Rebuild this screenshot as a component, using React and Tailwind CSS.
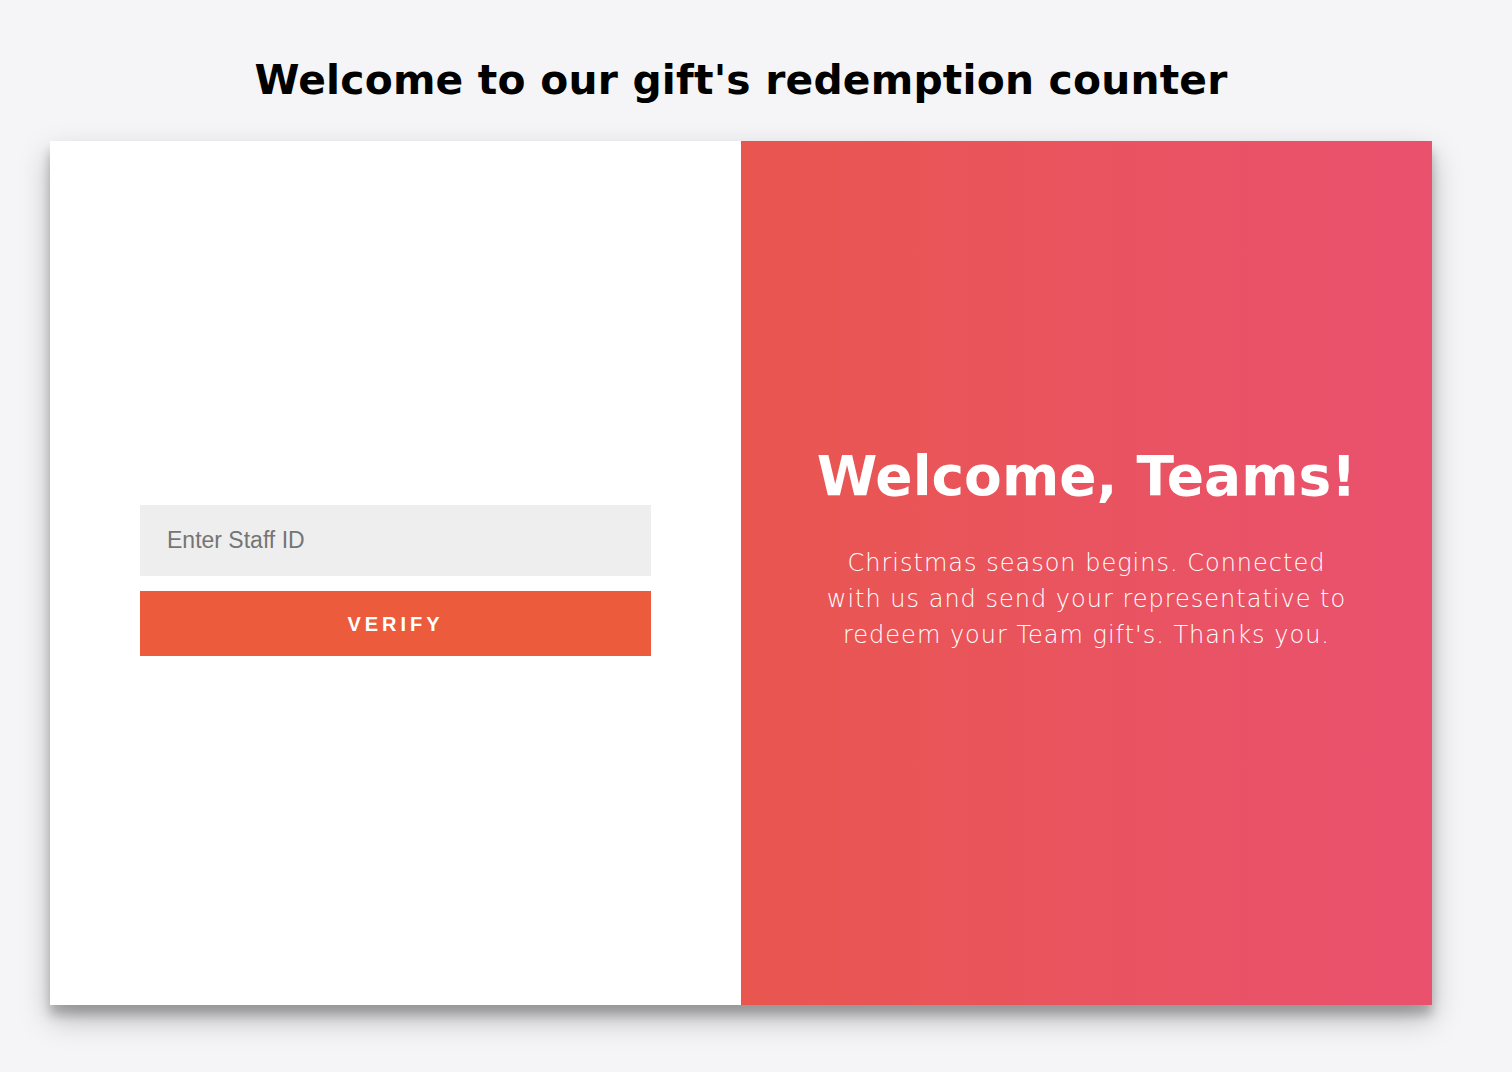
export default function App() {
  return (
    <div className="min-h-[1072px] w-full bg-[#f5f5f7] pt-[53px] font-['Liberation_Sans',Arial,sans-serif]">
      <div className="ml-[50px] w-[1382px]">
        <h1 className="text-center font-['DejaVu_Sans',sans-serif] text-[40.8px] leading-[54px] font-extrabold tracking-[0.2px] text-black">
          Welcome to our gift's redemption counter
        </h1>
        <div className="mt-[34px] flex h-[864px] bg-white shadow-[0_14px_28px_rgba(0,0,0,0.25),0_10px_10px_rgba(0,0,0,0.22)]">
          <div className="flex w-[691px] flex-col justify-center px-[90px] pt-[15px]">
            <input
              type="text"
              placeholder="Enter Staff ID"
              className="h-[71px] w-full bg-[#eeeeee] px-[27px] font-['Liberation_Sans',Arial,sans-serif] text-[23px] text-[#333] outline-none placeholder:text-[#757575]"
            />
            <button className="mt-[15px] h-[65px] w-full bg-[#eb5b3c] font-['Liberation_Sans',Arial,sans-serif] text-[20px] font-bold tracking-[4px] text-white">
              VERIFY
            </button>
          </div>
          <div className="flex w-[691px] flex-col items-center justify-center bg-gradient-to-r from-[#e9564f] to-[#e9516e] pb-[52px] text-center text-white">
            <h2 className="font-['DejaVu_Sans',sans-serif] text-[55px] leading-[70px] font-extrabold">
              Welcome, Teams!
            </h2>
            <p className="mt-[34px] w-[532px] font-['DejaVu_Sans',sans-serif] text-[24px] leading-[36px] font-extralight tracking-[1px]">
              Christmas season begins. Connected with us and send your representative to redeem your Team gift's. Thanks you.
            </p>
          </div>
        </div>
      </div>
    </div>
  );
}
